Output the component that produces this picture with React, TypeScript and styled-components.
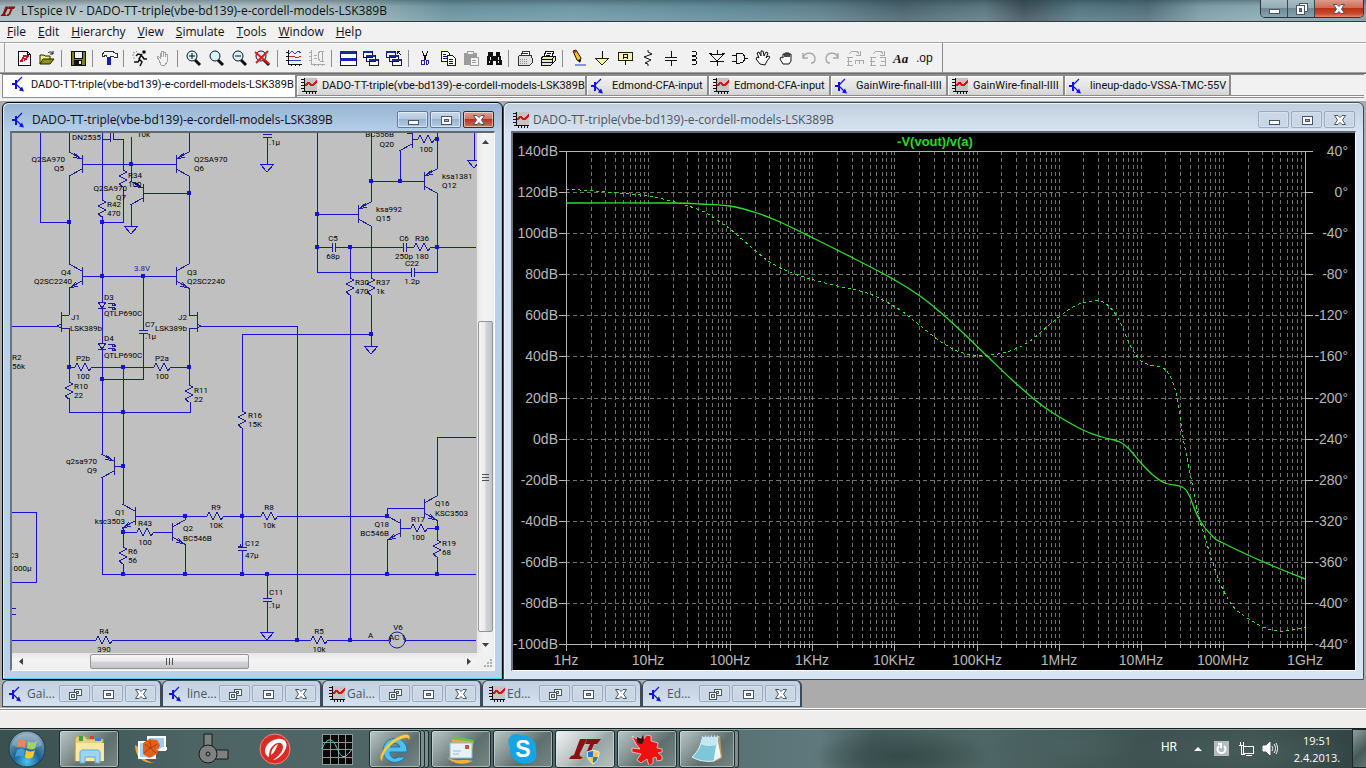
import React from 'react';
import styled, { createGlobalStyle, css } from 'styled-components';

const UI = '"Open Sans", "Noto Sans", sans-serif';
const SMALL = 'Roboto, "Liberation Sans", sans-serif';
const PLAIN = '"Liberation Sans", Arial, sans-serif';

const GlobalStyle = createGlobalStyle`
  *, *::before, *::after { box-sizing: border-box; }
  body { margin: 0; background: #f0f0f0; font-family: ${UI}; font-size: 12px; color: #101010; }
  button { font: inherit; color: inherit; margin: 0; padding: 0; border: 0; background: none; }
  svg { display: block; flex-shrink: 0; }
  h1, h2 { margin: 0; font-size: 12px; line-height: 16px; font-weight: 400; }
`;

const Screen = styled.div`
  display: flex;
  flex-direction: column;
  min-height: 100vh;
`;

/* ---------- main window chrome ---------- */

const TitleBar = styled.header`
  display: flex;
  justify-content: space-between;
  height: 22px;
  padding-right: 2px;
  border-bottom: 1px solid #303c42;
  background:
    linear-gradient(to bottom, rgba(30, 50, 58, 0.35), rgba(255, 255, 255, 0) 30%, rgba(255, 255, 255, 0.12) 90%),
    linear-gradient(to right, #a3b6bc 0, #b3c3c8 8%, #a5babf 24%, #83a2aa 29%, #66909c 33%, #6d96a4 42%, #5f8a99 52%,
      #5d7f8b 60%, #48626c 66%, #5b7780 72%, #3e5058 75%, #527681 79%, #4f6d78 84%, #7b9ca6 88%, #86a7b0 92%, #7f99a0 100%);
`;

const TitleCaption = styled.div`
  display: flex;
  align-items: center;
  gap: 5px;
  color: #0c1114;
`;

const FrameButtons = styled.div`
  display: flex;
  height: 18px;
  border: 1px solid #28343a;
  border-top: 0;
  border-radius: 0 0 5px 5px;
  overflow: hidden;
`;

const FrameButton = styled.button<{ $close?: boolean }>`
  display: grid;
  place-items: center;
  width: ${p => (p.$close ? 48 : 27)}px;
  border-right: ${p => (p.$close ? 0 : 1)}px solid #3a484f;
  background: ${p =>
    p.$close
      ? 'linear-gradient(to bottom, #dc9a8b 0, #cf6b54 45%, #b83314 50%, #c8492c 80%, #e08a66 100%)'
      : 'linear-gradient(to bottom, #a9bdc4 0, #94acb4 45%, #6c8a95 50%, #86a4ad 100%)'};
`;

const MenuBar = styled.nav`
  display: flex;
  align-items: center;
  height: 21px;
  padding-left: 1px;
  border-bottom: 1px solid #a4a4a4;
  background: #f1f1f1;
`;

const MenuItem = styled.button`
  padding: 0 6px;
  line-height: 18px;
  &::first-letter { text-decoration: underline; }
`;

const ToolBar = styled.div`
  display: flex;
  height: 31px;
  padding: 0 4px;
  border-bottom: 1px solid #6e6e6e;
  box-shadow: inset 0 -1px 0 #a0a0a0, inset 0 1px 0 #fff;
  background: #f1f1f1;
`;

const ToolBand = styled.div`
  display: flex;
  align-items: center;
  padding: 0 7px;
  border-left: 1px solid #a0a0a0;
  border-right: 1px solid #8c8c8c;
`;

const ToolButton = styled.button`
  display: grid;
  place-items: center;
  width: 23px;
  height: 22px;
`;

const ToolSeparator = styled.div`
  width: 1px;
  height: 17px;
  margin: 0 4px 0 3px;
  background: #8c8c8c;
`;

const TabStrip = styled.div`
  display: flex;
  align-items: flex-start;
  height: 24px;
  margin: 0 2px 3px;
  padding-top: 2px;
  border-bottom: 1px solid #8c8c8c;
  border-left: 1px solid #8c8c8c;
  box-shadow: inset 0 -1px 0 #fff, inset 0 -2px 0 #8c8c8c, inset 0 1px 0 #8c8c8c;
  background: #f1f1f1;
`;

const Tab = styled.button<{ $w: number; $active?: boolean }>`
  display: flex;
  align-items: center;
  gap: 5px;
  width: ${p => p.$w}px;
  height: 19px;
  padding-left: 4px;
  border-right: 2px solid #8a8a8a;
  font-family: ${SMALL};
  font-size: 11px;
  white-space: nowrap;
  background: linear-gradient(to bottom, #f2f2f2 0, #e6e6e6 50%, #d4d4d4 100%);
  box-shadow: inset 1px 1px 0 #fff, 0 -1px 0 #8c8c8c;
  ${p => p.$active && css`
    gap: 3px;
    height: 22px;
    margin-top: -1px;
    padding: 0 0 4px 9px;
    background: #fff;
    box-shadow: none;
  `}
`;

/* ---------- document windows ---------- */

const Workspace = styled.main`
  display: flex;
  flex-direction: column;
  flex: 1;
  padding: 1px 2px;
  background: #ababab;
`;

const Documents = styled.div`
  display: grid;
  grid-template-columns: minmax(0, 501fr) minmax(0, 861fr);
  flex: 1;
  min-height: 400px;
`;

const DocWindow = styled.section<{ $active?: boolean }>`
  display: flex;
  flex-direction: column;
  min-width: 0;
  padding: 0 7px 8px;
  border: 1px solid ${p => (p.$active ? '#05080b' : '#3e4b59')};
  border-radius: 6px 6px 0 0;
  background: ${p =>
    p.$active
      ? 'linear-gradient(to bottom, #98b4d2 0, #a6c1dd 14px, #b8d0ea 30px, #b9d1ea 100%)'
      : 'linear-gradient(to bottom, #bfcddd 0, #ccd9e7 14px, #d7e4f2 30px, #d7e4f2 100%)'};
  box-shadow: ${p =>
    p.$active ? 'inset -1px -1px 0 #4fd3ee, inset 1px 1px 0 #d8ecfb' : 'inset 1px 1px 0 #e6f0f8'};
`;

const DocTitle = styled.div<{ $active?: boolean }>`
  display: flex;
  align-items: center;
  gap: 4px;
  height: 28px;
  padding: 5px 0 0 2px;
  color: ${p => (p.$active ? '#0a0f14' : '#4c5661')};
`;

const DocName = styled.h2`
  flex: 1;
  min-width: 0;
  overflow: hidden;
  white-space: nowrap;
`;

const ControlGroup = styled.div`
  display: flex;
  gap: 2px;
  padding-right: 1px;
`;

const ControlButton = styled.button<{ $tone: 'blue' | 'red' | 'pale' }>`
  display: grid;
  place-items: center;
  width: 31px;
  height: 17px;
  border: 1px solid ${p => (p.$tone === 'red' ? '#5d1c1c' : p.$tone === 'blue' ? '#62799a' : '#9aabc0')};
  border-radius: 2px;
  box-shadow: inset 0 0 0 1px ${p => (p.$tone === 'pale' ? '#d5e0ec' : 'rgba(255, 255, 255, 0.5)')};
  background: ${p =>
    p.$tone === 'red'
      ? 'linear-gradient(to bottom, #dba197 0, #cf7567 45%, #b23626 50%, #cf6f58 100%)'
      : p.$tone === 'blue'
        ? 'linear-gradient(to bottom, #c6d7ea 0, #b4cae2 45%, #98b3d0 50%, #b5cde6 100%)'
        : 'linear-gradient(to bottom, #ccd8e6, #c8d5e4)'};
`;

const Pane = styled.div`
  display: flex;
  flex-direction: column;
  flex: 1;
  min-height: 0;
  border: 1px solid #fff;
  border-top: 2px solid #5f6770;
  border-left: 2px solid #6b7480;
`;

const SchematicGrid = styled.div`
  display: grid;
  flex: 1;
  grid-template-columns: minmax(0, 1fr) 17px;
  grid-template-rows: minmax(0, 1fr) 17px;
`;

const Sheet = styled.svg`
  width: 100%;
  height: 100%;
  min-height: 0;
  background: #c0c0c0;
  font-family: ${SMALL};
  font-size: 8px;
`;

const ScrollBar = styled.div<{ $vertical?: boolean }>`
  display: flex;
  flex-direction: ${p => (p.$vertical ? 'column' : 'row')};
  background: linear-gradient(${p => (p.$vertical ? 'to right' : 'to bottom')}, #e6e6e6, #f3f3f3 40%, #efefef);
`;

const ScrollArrow = styled.button`
  display: grid;
  place-items: center;
  width: 17px;
  height: 17px;
`;

const ScrollGap = styled.div<{ $grow: number }>`
  flex: ${p => p.$grow} 1 0;
`;

const ScrollThumb = styled.div<{ $grow: number; $vertical?: boolean }>`
  display: grid;
  place-items: center;
  flex: ${p => p.$grow} 1 0;
  margin: ${p => (p.$vertical ? '0 1px' : '1px 0')};
  border: 1px solid #959595;
  border-radius: 2px;
  background: linear-gradient(${p => (p.$vertical ? 'to right' : 'to bottom')}, #f6f6f6 0, #e9e9ea 48%, #d3d4d7 52%, #c3c4c8 100%);
`;

const SizeGrip = styled.div`
  display: grid;
  place-items: end;
  padding: 0 1px 1px 0;
  background: #f0f0f0;
`;

const Plot = styled.svg`
  flex: 1 1 0;
  width: 100%;
  min-height: 0;
  background: #000;
  font-family: ${PLAIN};
  font-size: 14px;
`;

const MinimizedRow = styled.div`
  display: flex;
  height: 27px;
`;

const MinimizedWindow = styled.section`
  display: flex;
  align-items: center;
  gap: 2px;
  width: 160px;
  padding: 0 3px 0 6px;
  border: 1px solid #3e4b59;
  border-width: 1px 2px 1px 1px;
  border-radius: 6px 6px 0 0;
  background: linear-gradient(to bottom, #c3d0df 0, #cbd8e7 50%, #d5e2f0 100%);
  color: #4c5661;
`;

const StatusBar = styled.footer`
  height: 20px;
  border-top: 1px solid #fff;
  box-shadow: inset 0 1px 0 #8f8f8f, inset 0 2px 0 #fafafa;
  background: #f0eeed;
`;

/* ---------- taskbar ---------- */

const TaskBar = styled.div`
  display: flex;
  height: 40px;
  border-top: 1px solid #16201f;
  box-shadow: inset 0 1px 0 #8ea3a2;
  background:
    radial-gradient(ellipse 90px 26px at 66% 70%, #354a49, transparent),
    radial-gradient(ellipse 70px 22px at 78% 40%, #48605f, transparent),
    radial-gradient(ellipse 110px 26px at 91% 60%, #465b58, transparent),
    linear-gradient(to right, #39504f 0, #4d6464 14%, #4f6566 26%, #567072 52%, #60797c 60%, #445a5a 64%, #4e6665 72%,
      #3d5251 84%, #3f5450 92%, #2f4443 100%);
`;

const StartButton = styled.button`
  display: grid;
  place-items: center;
  width: 59px;
  padding-right: 5px;
`;

const TaskList = styled.div`
  display: flex;
  flex: 1;
  gap: 2px;
  padding: 1px 0 0;
`;

const TaskSlot = styled.div`
  display: flex;
  width: 60px;
  height: 38px;
`;

const TaskButton = styled.button<{ $state: 'idle' | 'open' | 'focus' }>`
  display: grid;
  place-items: center;
  flex: 1;
  border: 1px solid transparent;
  border-radius: 3px;
  ${p => p.$state !== 'idle' && css`
    border-color: #1d2a2b;
    box-shadow: inset 0 0 0 1px rgba(215, 230, 230, 0.55);
    background: ${p.$state === 'focus'
      ? 'linear-gradient(135deg, #f0f4f3 0, #b9c3c2 45%, #99a5a4 60%, #b7c2c0 100%)'
      : 'linear-gradient(135deg, #bac7c7 0, #82908f 38%, #5e6f6e 60%, #788786 100%)'};
  `}
`;

const StackEdge = styled.div`
  width: 4px;
  border: 1px solid #1d2a2b;
  border-left: 0;
  border-radius: 0 3px 3px 0;
  background: #7e8e8e;
`;

const Tray = styled.div`
  display: flex;
  align-items: center;
  color: #fff;
`;

const Language = styled.span`
  width: 25px;
  font-family: ${SMALL};
  font-size: 12px;
  line-height: 36px;
  align-self: flex-start;
`;

const TrayIcon = styled.button`
  display: grid;
  place-items: center;
  width: 24px;
`;

const Clock = styled.time`
  width: 70px;
  font-size: 11px;
  line-height: 17px;
  text-align: center;
`;

const ShowDesktop = styled.button`
  align-self: stretch;
  width: 14px;
  border: 1px solid #1b2625;
  border-right: 0;
  background: linear-gradient(135deg, #8e9f9e, #465a58 60%, #5f7270);
`;

/* ---------- icons ---------- */

const TransistorIcon = () => (
  <svg width="16" height="16" viewBox="0 0 16 16" fill="none" stroke="#1010e0" aria-hidden>
    <path d="M0 8h4M4 4v9" strokeWidth="2" shapeRendering="crispEdges" />
    <path d="M4 7l6-6M5 9l5 5" strokeWidth="1.2" />
    <path d="M12 15.500l-5-1 3-4z" fill="#1010e0" stroke="none" />
  </svg>
);

const GraphIcon = () => (
  <svg width="16" height="16" viewBox="0 0 16 16" fill="none" shapeRendering="crispEdges" aria-hidden>
    <path d="M3 0h13v13H3z" fill="#c4c4c4" />
    <path d="M3 0v14M1 13h15M0 1h3M0 4h3M0 7h3M0 10h3M5 13v3M8 13v3M11 13v3M14 13v3" stroke="#101010" />
    <path d="M4 8l3-3h1l2 2h2l4-4" stroke="#e01010" strokeWidth="2" />
  </svg>
);

const LtLogo = ({ size }: { size: number }) => (
  <svg width={size} height={size} viewBox="0 0 32 32" fill="#8c0f12" aria-hidden>
    <path d="M11 7h7l-7 13c-1 3 0 4 3 4l-2 2H1l2-3 2-1z" />
    <path d="M18 7h13l-3 5h-3l-4 10-4 4h-4l2-4h2l4-10h-5z" />
  </svg>
);

type Kind = 'min' | 'max' | 'close' | 'restore' | 'cascade';
const Glyph = ({ kind, edge = '#4a5563' }: { kind: Kind; edge?: string }) => (
  <svg width="14" height="12" viewBox="0 0 14 12" fill="none" stroke={edge} shapeRendering={kind === 'close' ? 'auto' : 'crispEdges'} aria-hidden>
    {kind === 'min' && <path d="M2 6h10v4H2z" fill="#fff" />}
    {kind === 'max' && <><path d="M2 2h10v8H2z" fill="#fff" /><path d="M5 5h4v2H5z" fill="#9fb0c4" /></>}
    {kind === 'restore' && <><path d="M5 0h8v8h-8z" fill="#fff" /><path d="M2 2h8v9H2z" fill="#fff" /><path d="M5 5h2v3H5z" fill="#6c8a95" /></>}
    {kind === 'cascade' && <><path d="M6 1h7v6H6z" fill="#fff" /><path d="M8 3h2v2H8z" /><path d="M1 4h7v7H1z" fill="#fff" /><path d="M3 6h3v3H3z" fill="#c8d5e4" /></>}
    {kind === 'close' && <path d="M1.500 1.500h3.500L7 3.500l2-2h3.500L9.500 6l3 4.500H9L7 8.500l-2 2H1.500l3-4.500z" fill="#fff" />}
  </svg>
);

const Lens = ({ children }: { children?: React.ReactNode }) => (
  <>
    <path d="M9 10l5 5" stroke="#101010" strokeWidth="3" />
    <circle cx="6" cy="6" r="5" fill="#d6f4f2" stroke="#101030" />
    {children}
  </>
);

const tools: Record<string, React.ReactNode> = {
  'New schematic': <><path d="M2 1h9l3 3v11H2z" fill="#fff" stroke="#101010" /><path d="M11 1v3h3" stroke="#101010" /><path d="M4 11l2-1 2-4h-1M4 11h3M8 6h4l-1 2M8 10l3-2" stroke="#d01020" strokeWidth="2" /></>,
  Open: <><path d="M1 14V5h4l1 1h5v3" fill="#f0f080" stroke="#202000" /><path d="M1 14l3-5h11l-4 5z" fill="#909020" stroke="#202000" /><path d="M9 3c2-2 4-1 5 1M14 1v3h-3" stroke="#101010" /></>,
  Save: <><path d="M1 1h14v14H1z" fill="#808020" stroke="#101010" /><path d="M4 1h8v7H4z" fill="#f4f4f4" stroke="#101010" /><path d="M4 10h8v5H4z" fill="#101010" /><path d="M9 11h2v3H9z" fill="#f4f4f4" /></>,
  'Control panel': <><path d="M1 5l2-3 3-1h5l3 2h2v4h-3l-2-1-2 1H6L5 5 2 7z" fill="#f4f4f4" stroke="#303030" /><path d="M8 7v8" stroke="#1020c0" strokeWidth="4" /></>,
  Run: <><circle cx="12" cy="2" r="1.800" fill="#101010" /><path d="M10 4L7 9l3 3-2 4M8 9l-2 3H2M10 5L6 4 4 6M10 6l2 3h3" stroke="#101010" strokeWidth="1.500" /><path d="M1 2l2 1M0 5h2M1 8h2M4 1l1 1" stroke="#909090" /></>,
  Halt: <path d="M4 10L2 7l1-1 2 2V3h1v4V1h2v6V2h2v5V4h2v8l-2 3H6z" fill="#f4f4f4" stroke="#a4a4a4" />,
  'Zoom in': <Lens><path d="M3 6h6M6 3v6" stroke="#101010" /></Lens>,
  Pan: <Lens />,
  'Zoom out': <Lens><path d="M3 6h6" stroke="#101010" /></Lens>,
  'Zoom full': <Lens><path d="M0 2l14 12M13 1L1 13" stroke="#e01818" strokeWidth="2" /></Lens>,
  'Pick visible traces': <><path d="M2 0v14h14M0 2h2M0 6h2M0 10h2M5 14v2M9 14v2M13 14v2" stroke="#101010" /><path d="M3 4l3-3 3 3 3-3 3 2" stroke="#3040c0" /><path d="M3 7l4-1 4 2 4-2" stroke="#d02020" /><path d="M3 11l4-1 4 1 4-1" stroke="#3040c0" /></>,
  'Autorange': <><path d="M2 0v14h14M0 2h2M0 6h2M0 10h2M5 14v2M9 14v2M13 14v2M5 5h3M5 8h3M15 1h-4L9 4v4l2 3h4M13 1v10" stroke="#a8a8a8" /></>,
  'Tile windows': <><path d="M0 1h16v7H0zM0 8h16v7H0z" fill="#fff" stroke="#101060" /><path d="M0 2h16M0 9h16" stroke="#1828a0" strokeWidth="3" /></>,
  'Cascade windows': <><path d="M0 1h9v6H0zM3 5h9v6H3zM6 9h9v6H6z" fill="#fff" stroke="#101060" /><path d="M0 2h9M3 6h9M6 10h9" stroke="#1828a0" strokeWidth="2" /></>,
  'Close windows': <><path d="M0 1h9v6H0zM3 5h9v6H3zM6 9h9v6H6z" fill="#fff" stroke="#101060" /><path d="M0 2h9M3 6h9M6 10h9" stroke="#1828a0" strokeWidth="2" /><path d="M15 5l-4-4M11 4V1h3" stroke="#101010" /></>,
  Cut: <><path d="M5 1l4 9M11 1L7 10" stroke="#101010" /><path d="M5 10h2v4H4v-3zM9 10h2l1 3-1 1H9z" stroke="#2020a0" /></>,
  Copy: <><path d="M1 1h6l2 2v8H1z" fill="#fff" stroke="#101060" /><path d="M3 4h3M3 6h4M3 8h4" stroke="#101060" /><path d="M7 5h5l3 3v7H7z" fill="#fff" stroke="#101060" /><path d="M9 9h4M9 11h4M9 13h4" stroke="#101060" /></>,
  Paste: <><path d="M1 3h12v11H1z" fill="#9c9c9c" stroke="#9c9c9c" /><path d="M4 1h6v3H4z" fill="#f0f0f0" stroke="#9c9c9c" /><path d="M7 7h8v8H7z" fill="#f4f4f4" stroke="#9c9c9c" /><path d="M9 10h4M9 12h4" stroke="#9c9c9c" /></>,
  Find: <><path d="M3 2h3v4h4V2h3l2 8v4h-5v-4H6v4H1v-4z" fill="#101010" stroke="#101010" /><path d="M4 7v3M12 7v3M3 11v2M12 11v2" stroke="#e8e8e8" /></>,
  'Print setup': <><path d="M4 6l2-5h6l1 5M5 3h6" fill="#fff" stroke="#303030" /><path d="M1 7l2-2h11l1 3v5l-2 2H1z" fill="#e0e0e0" stroke="#303030" /><path d="M3 9h8M3 11h8M3 13h8" stroke="#909090" strokeDasharray="1 1" /></>,
  Print: <><path d="M4 6l2-5h8l-2 5z" fill="#fff" stroke="#101010" /><path d="M7 3h4M6 5h4" stroke="#101010" /><path d="M1 8l3-2h11v5l-4 4H1z" fill="#e8e8c0" stroke="#101010" /><path d="M1 9h11l3-3M1 12h11M12 9v5" stroke="#101010" /></>,
  Wire: <><path d="M2 1l3-1 5 8-1 4-3-2z" fill="#f0c820" stroke="#101010" /><path d="M2 1l3-1 1 2-3 1z" fill="#d02020" /><path d="M7 10l2 3V9z" fill="#101010" /><path d="M4 15h11" stroke="#2030e0" /></>,
  Ground: <><path d="M8 1v7" stroke="#101010" /><path d="M1 8h14l-7 7z" fill="#f4f4a0" stroke="#202000" /></>,
  'Label net': <><path d="M1 2h14v8H1z" fill="#f4f4b0" stroke="#202000" /><path d="M6 9V4h4v5M6 7h4M8 10v5" stroke="#101010" /></>,
  Resistor: <path d="M8 0v2l4 2-8 3 7 3-6 3 3 1v2" stroke="#101010" />,
  Capacitor: <path d="M8 1v6M8 10v6M2 7h12M2 10h12" stroke="#101010" />,
  Inductor: <path d="M6 1c6 0 6 5 0 5c6 0 6 4 0 4c6 0 6 5 0 5" stroke="#101010" />,
  Diode: <path d="M0 3h3M13 3h3M8 0v4M8 11v5M1 4h14l-7 7zM1 11h14" stroke="#101010" />,
  Component: <path d="M0 5h4M0 11h4M4 3v10h4c6 0 6-10 0-10zM12 8h4" stroke="#101010" />,
  Move: <path d="M5 14L1 9 2 7l2 1-2-5 2-1 2 4V1h2l1 5 2-4 2 1-2 5 2-2 2 1-3 4-2 4z" fill="#fff" stroke="#101010" />,
  Drag: <path d="M5 14l-3-5 1-2 2 1V4h2v3V3h2v4V3h2v4V4h2v7l-2 3z" fill="#fff" stroke="#101010" />,
  Undo: <path d="M2 3v5h5M2 8c2-7 12-6 12 1 0 3-2 4-4 4" stroke="#a8a8a8" strokeWidth="1.400" />,
  Redo: <path d="M14 3v5H9M14 8C12 1 2 2 2 9c0 3 2 4 4 4" stroke="#a8a8a8" strokeWidth="1.400" />,
  Rotate: <path d="M2 4c3-4 8-4 10 0M13 1v4H9M0 7h6M1 7v8M0 11h5M0 15h6M8 14v-4h8v4M12 10v4" stroke="#a8a8a8" />,
  Mirror: <path d="M3 4c3-4 8-4 10 0M14 1v4h-4M0 7h6M1 7v8M0 11h5M0 15h6M10 7h6M15 7v8M11 11h4M10 15h6" stroke="#a8a8a8" />,
  Text: <text x="0" y="13" fontFamily="Liberation Serif, serif" fontSize="13" fontWeight="700" fontStyle="italic" fill="#101010">Aa</text>,
  'SPICE directive': <text x="0" y="12" fontFamily="Liberation Sans, sans-serif" fontSize="12" fill="#101010">.op</text>,
};

const toolGroups = [
  ['New schematic', 'Open'], ['Save'], ['Control panel'], ['Run', 'Halt'],
  ['Zoom in', 'Pan', 'Zoom out', 'Zoom full'], ['Pick visible traces', 'Autorange'],
  ['Tile windows', 'Cascade windows', 'Close windows'], ['Cut', 'Copy', 'Paste', 'Find'],
  ['Print setup', 'Print'],
  ['Wire', 'Ground', 'Label net', 'Resistor', 'Capacitor', 'Inductor', 'Diode', 'Component', 'Move', 'Drag',
    'Undo', 'Redo', 'Rotate', 'Mirror', 'Text', 'SPICE directive'],
];
const smooth = ['Zoom in', 'Pan', 'Zoom out', 'Zoom full', 'Move', 'Drag', 'Undo', 'Redo', 'Run', 'Open', 'Wire', 'Resistor'];

const menus = ['File', 'Edit', 'Hierarchy', 'View', 'Simulate', 'Tools', 'Window', 'Help'];
const docName = 'DADO-TT-triple(vbe-bd139)-e-cordell-models-LSK389B';
const tabs = [
  { name: docName, w: 294, graph: false },
  { name: docName, w: 290, graph: true },
  { name: 'Edmond-CFA-input', w: 122, graph: false },
  { name: 'Edmond-CFA-input', w: 122, graph: true },
  { name: 'GainWire-finall-IIII', w: 117, graph: false },
  { name: 'GainWire-finall-IIII', w: 117, graph: true },
  { name: 'lineup-dado-VSSA-TMC-55V', w: 166, graph: false },
];
const minimized = [
  { name: 'Gai...', graph: false }, { name: 'line...', graph: false }, { name: 'Gai...', graph: true },
  { name: 'Ed...', graph: true }, { name: 'Ed...', graph: false },
];

/* ---------- schematic ---------- */

const WIRE = '#1414d2';
const SYMBOL = '#1c1c9c';

const wires = [
  'M40 133V222H69', 'M69 133V152M69 176V264M69 288V315M69 328V382M69 398V412H190V402',
  'M102 133V200M102 216V302M102 308V343M102 349V454M102 478V574H476', 'M102 139H110M113 139H123V170M123 187V222H102',
  'M131 137V181M131 205V226', 'M82 164H176', 'M189 133V152M189 176V264M189 288V315M189 328V385', 'M143 193H189',
  'M82 276H176', 'M143 276V330M143 333V379H102', 'M12 326H57M201 326H297V640', 'M69 367H75M92 367H154M171 367H189',
  'M123 367V504M123 528V547M123 564V574', 'M114 466H123', 'M135 516H207M224 516H261M278 516H387',
  'M123 532H137M154 532H172', 'M185 520V516M185 544V574', 'M12 512H36V582H12', 'M12 640H96M113 640H311M328 640H389M405 640H476',
  'M242 411V334H371M242 428V547M242 550V574', 'M267 574V598M267 601V632', 'M267 137V164', 'M317 133V272H411M317 214H358M317 247H332M335 247H403M406 247H414M431 247H476',
  'M371 133V202M371 226V278M371 295V346', 'M371 181H424M400 181V151', 'M350 247V278M350 295V640', 'M414 272H437V193M437 133V169', 'M412 139H418M435 139H437',
  'M474 133V160', 'M476 437H437V496M437 520V540M437 557V574', 'M424 508H387V516M387 540V574M400 528H411M428 528H437',
];
const nodes = [
  [69, 222], [102, 222], [131, 164], [189, 193], [102, 276], [143, 276], [69, 367], [123, 367], [189, 367], [102, 379],
  [123, 412], [123, 466], [123, 532], [185, 516], [242, 516], [387, 516], [123, 574], [185, 574], [242, 574], [267, 574],
  [387, 574], [437, 574], [297, 640], [350, 640], [317, 214], [317, 247], [350, 247], [437, 247], [371, 181], [400, 181],
  [437, 139], [371, 334], [437, 528],
];
const vResistors = [[102, 200], [123, 170], [69, 382], [189, 385], [123, 547], [242, 411], [350, 278], [371, 278], [437, 540]];
const hResistors = [[75, 367], [154, 367], [207, 516], [261, 516], [137, 532], [96, 640], [311, 640], [414, 247], [418, 139], [411, 528]];
const vCaps = [[143, 330], [242, 547], [267, 598], [267, 134]];
const hCaps = [[332, 247], [403, 247], [411, 272]];
const grounds = [[131, 226], [267, 164], [267, 632], [371, 346], [474, 160]];
const bjts: [number, number, 1 | -1, boolean][] = [
  [82, 164, -1, true], [176, 164, 1, true], [143, 193, -1, true], [82, 276, -1, false], [176, 276, 1, false],
  [114, 466, -1, true], [135, 516, -1, false], [172, 532, 1, false], [358, 214, 1, true], [424, 181, 1, true],
  [412, 139, -1, true], [424, 508, 1, false], [400, 528, -1, false],
];
const labels: [string, number, number, ('end' | 'middle')?][] = [
  ['DN2535', 72, 140], ['10k', 137, 137], ['Q2SA970', 65, 162, 'end'], ['Q5', 64, 171, 'end'], ['Q2SA970', 194, 162], ['Q6', 194, 171],
  ['R34', 128, 178], ['100', 128, 187], ['Q2SA970', 127, 191, 'end'], ['Q7', 126, 200, 'end'], ['R42', 107, 207], ['470', 107, 216],
  ['Q4', 71, 275, 'end'], ['Q2SC2240', 72, 284, 'end'], ['Q3', 187, 275], ['Q2SC2240', 187, 284], ['D3', 104, 300], ['QTLP690C', 104, 316],
  ['J1', 71, 320], ['LSK389b', 70, 331], ['J2', 187, 320, 'end'], ['LSK389b', 187, 331, 'end'], ['C7', 145, 327], ['.1µ', 145, 339],
  ['D4', 104, 341], ['QTLP690C', 104, 358], ['R2', 12, 360], ['56k', 12, 369], ['P2b', 83, 361, 'middle'], ['100', 83, 379, 'middle'],
  ['P2a', 162, 361, 'middle'], ['100', 162, 379, 'middle'], ['R10', 74, 389], ['22', 74, 398], ['R11', 194, 393], ['22', 194, 402],
  ['R16', 248, 418], ['15K', 248, 427], ['q2sa970', 97, 464, 'end'], ['Q9', 97, 473, 'end'], ['Q1', 125, 515, 'end'], ['ksc3503', 125, 524, 'end'],
  ['R43', 145, 526, 'middle'], ['100', 145, 545, 'middle'], ['Q2', 183, 531], ['BC546B', 183, 541], ['R9', 216, 510, 'middle'], ['10K', 216, 528, 'middle'],
  ['R8', 269, 510, 'middle'], ['10k', 269, 528, 'middle'], ['R6', 128, 554], ['56', 128, 563], ['C12', 245, 546], ['47µ', 245, 558],
  ['C11', 269, 595], ['.1µ', 269, 608], ['C3', 9, 558], ['1000µ', 9, 571], ['R4', 104, 634, 'middle'], ['390', 104, 652, 'middle'],
  ['R5', 319, 634, 'middle'], ['10k', 319, 652, 'middle'], ['A', 368, 638], ['V6', 398, 630, 'middle'], ['AC 1', 389, 640],
  ['.1µ', 269, 145], ['BC556B', 394, 137, 'end'], ['Q20', 394, 147, 'end'], ['100', 426, 152, 'middle'], ['ksa1381', 442, 179], ['Q12', 442, 188],
  ['ksa992', 376, 212], ['Q15', 376, 221], ['C5', 333, 241, 'middle'], ['68p', 333, 259, 'middle'], ['C6', 404, 241, 'middle'], ['R36', 422, 241, 'middle'],
  ['250p', 404, 259, 'middle'], ['180', 422, 259, 'middle'], ['C22', 412, 266, 'middle'], ['1.2p', 412, 284, 'middle'],
  ['R30', 355, 285], ['470', 355, 294], ['R37', 376, 285], ['1k', 376, 294], ['Q16', 435, 506], ['KSC3503', 435, 516],
  ['R17', 418, 522, 'middle'], ['100', 418, 540, 'middle'], ['Q18', 389, 527, 'end'], ['BC546B', 389, 536, 'end'], ['R19', 442, 546], ['68', 442, 555],
];

const bjtPath = ([x, y, d, pnp]: [number, number, 1 | -1, boolean]) => {
  const body = `M${x} ${y - 9}V${y + 9}M${x} ${y - 5}L${x + 13 * d} ${y - 12}M${x} ${y + 5}L${x + 13 * d} ${y + 12}`;
  const arrow = pnp
    ? `M${x + 8 * d} ${y - 11}L${x + d} ${y - 5}L${x + 9 * d} ${y - 7}`
    : `M${x + 4 * d} ${y + 10}L${x + 12 * d} ${y + 12}L${x + 6 * d} ${y + 6}`;
  return body + arrow;
};
const ledPath = (x: number, y: number) =>
  `M${x - 4} ${y}h8l-4 6zM${x - 4} ${y + 6}h8M${x + 6} ${y + 1}h4v2h4M${x + 6} ${y + 5}h4v2h4M${x + 11} ${y + 1}l3 2l-3 1M${x + 11} ${y + 5}l3 2l-3 1`;

const Schematic = () => (
  <Sheet role="img" aria-label="Amplifier schematic">
    <g transform="translate(-12 -133)">
      <g fill="none" stroke={WIRE} shapeRendering="crispEdges">
        {wires.map(d => <path key={d} d={d} />)}
        {grounds.map(([x, y]) => <path key={`${x}-${y}`} d={`M${x - 7} ${y}h14l-7 8z`} />)}
      </g>
      <g fill="none" stroke={SYMBOL} shapeRendering="crispEdges">
        {vResistors.map(([x, y]) => <path key={`v${x}-${y}`} d={`M${x} ${y}l4 2l-8 4l8 4l-8 4l4 3`} />)}
        {hResistors.map(([x, y]) => <path key={`h${x}-${y}`} d={`M${x} ${y}l2 -4l4 8l4 -8l4 8l3 -4`} />)}
        {vCaps.map(([x, y]) => <path key={`c${x}-${y}`} d={`M${x - 4} ${y}h9M${x - 4} ${y + 3}h9`} />)}
        {hCaps.map(([x, y]) => <path key={`c${x}-${y}`} d={`M${x} ${y - 4}v9M${x + 3} ${y - 4}v9`} />)}
        {bjts.map(b => <path key={b.join()} d={bjtPath(b)} />)}
        <path d={ledPath(102, 302) + ledPath(102, 343)} />
        <path d="M61 312v20M61 315h8M61 328h8M57 326l4-2v4zM197 312v20M197 315h-8M197 328h-8M201 326l-4-2v4z" />
        <path d="M110 133v9M113 133v6M240 544v4M238 546h4M12 608h4M12 614h4" />
        <path d="M390 638v4M405 638v4" />
      </g>
      <circle cx="397" cy="640" r="8" fill="none" stroke={SYMBOL} />
      <g fill={WIRE} shapeRendering="crispEdges">
        {nodes.map(([x, y]) => <rect key={`${x}-${y}`} x={x - 2} y={y - 2} width="4" height="4" />)}
      </g>
      <g fill="#000">
        {labels.map(([t, x, y, a], i) => <text key={i} x={x} y={y} textAnchor={a}>{t}</text>)}
        <text x="134" y="271" fill="#2020a8">3.8V</text>
      </g>
    </g>
  </Sheet>
);

/* ---------- Bode plot ---------- */

const L = 566, R = 1305, T = 151, B = 644;
const gain: [number, number][] = [
  [566, 203], [673, 203], [700, 204], [730, 206], [757, 213], [780, 222], [813, 238], [853, 258], [893, 279],
  [920, 296], [940, 312], [960, 330], [987, 356], [1010, 378], [1035, 400], [1053, 413], [1083, 430], [1102, 437], [1120, 442],
  [1130, 450], [1141, 463], [1153, 475], [1165, 483], [1182, 487], [1189, 495], [1199, 519], [1213, 537],
  [1223, 543], [1248, 555], [1273, 566], [1305, 579],
];
const phase: [number, number][] = [
  [566, 189], [607, 192], [640, 195], [667, 200], [700, 210], [717, 220], [730, 229], [757, 252], [770, 262],
  [787, 271], [807, 278], [833, 285], [860, 291], [877, 297], [900, 310], [917, 323], [937, 339], [955, 350], [972, 355],
  [990, 355], [1010, 351], [1030, 341], [1055, 320], [1075, 306], [1092, 301], [1105, 303], [1118, 318], [1130, 345],
  [1140, 360], [1150, 365], [1163, 368], [1171, 378], [1177, 398], [1183, 437], [1191, 478], [1199, 517], [1212, 560],
  [1220, 583], [1230, 602], [1240, 613], [1263, 627], [1280, 631], [1292, 630], [1305, 627],
];

const curve = (p: [number, number][]) =>
  p.slice(1).reduce((d, b, i) => {
    const a = p[i], before = p[i - 1] ?? a, after = p[i + 2] ?? b;
    const c1 = [a[0] + (b[0] - before[0]) / 6, a[1] + (b[1] - before[1]) / 6];
    const c2 = [b[0] - (after[0] - a[0]) / 6, b[1] - (after[1] - a[1]) / 6];
    return `${d}C${c1.join(' ')} ${c2.join(' ')} ${b.join(' ')}`;
  }, `M${p[0].join(' ')}`);

const decadeX = (n: number) => Math.round(L + ((R - L) * n) / 9);
const rowY = (n: number) => Math.round(T + ((B - T) * n) / 12);
const minor = Array.from({ length: 9 }, (_, d) => [2, 3, 4, 5, 6, 7, 8, 9].map(k => decadeX(d + Math.log10(k)))).flat();
const major = Array.from({ length: 10 }, (_, d) => decadeX(d));
const rows = Array.from({ length: 13 }, (_, i) => i);
const freqs = ['1Hz', '10Hz', '100Hz', '1KHz', '10KHz', '100KHz', '1MHz', '10MHz', '100MHz', '1GHz'];

const BodePlot = () => (
  <Plot viewBox="513 133 842 537" role="img" aria-label="Gain and phase against frequency">
    <g fill="none" shapeRendering="crispEdges">
      <path stroke="#727272" strokeDasharray="4 3" d={[...minor, ...major.slice(1, 9)].map(x => `M${x} ${T}V${B}`).join('')} />
      <path stroke="#727272" strokeDasharray="4 3" d={rows.slice(1, 12).map(n => `M${L} ${rowY(n)}H${R}`).join('')} />
      <path stroke="#b4b4b4" d={`M${L} ${T}H${R}V${B}H${L}z`} />
      <path stroke="#b4b4b4" d={rows.map(n => `M${L - 7} ${rowY(n)}h7M${R} ${rowY(n)}h8`).join('')} />
      <path stroke="#b4b4b4" d={minor.map(x => `M${x} ${B}v4`).join('') + major.map(x => `M${x} ${B}v7`).join('')} />
      <path stroke="#34e034" strokeDasharray="3 3" d={curve(phase)} />
    </g>
    <path d={curve(gain)} fill="none" stroke="#2ee02e" strokeWidth="1.300" />
    <g fill="#b8b8b8">
      {rows.map(n => (
        <React.Fragment key={n}>
          <text x="558" y={rowY(n) + 5} textAnchor="end">{`${140 - 20 * n}dB`}</text>
          <text x="1348" y={rowY(n) + 5} textAnchor="end">{`${40 - 40 * n}°`}</text>
        </React.Fragment>
      ))}
      {freqs.map((f, i) => <text key={f} x={major[i]} y="665" textAnchor="middle">{f}</text>)}
    </g>
    <text x="935" y="146" textAnchor="middle" fontSize="13" fontWeight="700" fill="#22dd22">-V(vout)/v(a)</text>
  </Plot>
);

/* ---------- taskbar pictures ---------- */

const StartOrb = () => (
  <svg width="38" height="38" viewBox="0 0 38 38" aria-hidden>
    <defs>
      <radialGradient id="orb" cx="50%" cy="85%" r="80%">
        <stop offset="0" stopColor="#4fc4ee" /><stop offset="0.45" stopColor="#1c6294" /><stop offset="1" stopColor="#8aa5b4" />
      </radialGradient>
    </defs>
    <circle cx="19" cy="19" r="18" fill="url(#orb)" stroke="#1b3a50" />
    <path d="M10 11c3-2 5-2 8 0l-1 7c-3-2-6-2-8 0z" fill="#e8622c" />
    <path d="M20 11c3 2 6 2 9 0l-2 8c-3 1-5 1-8-1z" fill="#8cc63e" />
    <path d="M9 20c3-2 5-2 8 0l-2 7c-3-2-5-1-8 0z" fill="#3f9fe0" />
    <path d="M18 20c3 2 6 2 9 0l-2 7c-3 2-6 2-8 0z" fill="#fbc92c" />
    <path d="M4 15a15.500 15.500 0 0 1 30 0c-8 5-20 5-30 0z" fill="#fff" opacity="0.22" />
  </svg>
);

const pictures: Record<string, React.ReactNode> = {
  'Windows Explorer': <><path d="M2 6l2-3h8l2 3h16v22H2z" fill="#e9cf7c" stroke="#b89a45" /><path d="M6 3h4v5H6z" fill="#3aa04c" /><path d="M17 3h4v3h-4z" fill="#d5402e" /><path d="M22 5h6v3h-6z" fill="#3a80d0" /><path d="M3 10h28v18H3z" fill="#f8e8a6" /><path d="M7 30V20c0-2 1-3 3-3h14c2 0 3 1 3 3v10h-5v-6H12v6z" fill="#9fd4f2" stroke="#5ea8d8" /></>,
  'Photo Gallery': <><path d="M0 12c0 12 8 19 20 18-9-1-15-7-15-15z" fill="#f2a63a" /><path d="M3 8h18v18H3z" fill="#fff" /><path d="M5 10h14v14H5z" fill="#a8d4ea" /><path d="M12 3h19v15H12z" fill="#fff" /><path d="M14 5h15v11H14z" fill="#9dcdea" /><path d="M8 10l6-4 8 1 3 5-3 9-8 4-6-4z" fill="#e2601c" /><path d="M15 8l1 7 6-4M15 15l6 5M15 15l-6 5M15 15l-5-4" stroke="#a83a0c" /><path d="M21 17h11v-3h-3" fill="#fff" /></>,
  'CAD viewer': <g fill="#7f8080" stroke="#16191a"><path d="M7 1h8v13H7z" /><path d="M18 17h13v9H18z" /><circle cx="11" cy="21" r="9" /><circle cx="11" cy="21" r="2" /></g>,
  'Antivirus': <><circle cx="16" cy="16" r="15" fill="#dc2a24" stroke="#f48a80" /><path d="M10 24C2 20 7 8 18 6c8-1 11 4 9 9-2 6-9 12-13 12 8-5 12-12 9-16-3-3-9 0-12 6-1 3-1 6-1 7z" fill="#fff" /><path d="M12 22c0-5 3-9 7-11-2 5-4 9-7 11z" fill="#fff" /></>,
  'Signal scope': <g fill="none" shapeRendering="crispEdges"><path d="M1 1h30v30H1z" fill="#080808" stroke="#909898" /><path d="M9 1v30M17 1v30M24 1v30M1 9h30M1 16h30M1 24h30" stroke="#8c9494" /><path d="M1 16C5 5 11 4 15 13s7 17 16 3" stroke="#4fe0cc" shapeRendering="auto" /></g>,
  'Internet Explorer': <><path d="M28 18a12 12 0 1 0-2 6h-7c-3 3-8 1-8-5h17zM11 14c1-5 9-5 10 0z" fill="#4fbef0" stroke="#1b78b8" /><path d="M3 28c-5-3 3-17 14-23s15-4 13 2c0-3-4-3-12 1S3 22 3 28z" fill="#f6cf4a" stroke="#d39c1c" strokeWidth="0.500" /></>,
  'Windows Live Mail': <><path d="M9 3l20 4-3 16-19-5z" fill="#74b94a" /><path d="M7 6l21 3-2 16-20-4z" fill="#e8a54a" /><path d="M5 10h22v15H5z" fill="#e6f2fa" stroke="#8ebbd8" /><path d="M20 12h4v4h-4z" fill="#d8502c" /><path d="M8 18h8M8 21h6" stroke="#8ebbd8" /><path d="M2 24c8 6 16 1 26 4-8 4-20 4-26-4z" fill="#f4b13a" /></>,
  Skype: <><path d="M9 1c3 0 4 1 6 1a14 14 0 0 1 14 17c2 6-2 12-9 11A14 14 0 0 1 3 14C-1 8 3 1 9 1z" fill="#12a5e8" /><text x="16" y="24" textAnchor="middle" fontFamily="Liberation Sans, sans-serif" fontSize="23" fontWeight="700" fill="#fff">S</text></>,
  LTspice: <><path d="M11 6h7l-7 14c-1 3 0 4 3 4l-2 2H0l2-3 3-1z" fill="#8c0f12" /><path d="M18 6h14l-4 5h-3l-4 10h-4l4-10h-5z" fill="#8c0f12" /><path d="M18 19l6-2 6 2c0 6-2 9-6 12-4-3-6-6-6-12z" fill="#f3cf3c" stroke="#e8eef2" /><path d="M24 18v6h-5c0-2 0-3 0-5zM24 24h5c-1 3-2 5-5 6z" fill="#2f74c8" /></>,
  IrfanView: <><path d="M1 3l5 3 3-2 3 3 4-5 4 1v5l7 2-1 5 5 1v3l-4 1 4 3v4l-5 1-1-4-3 1v5l-4 3-2-7-6 4-4-3 4-6-9-2v-4l8 1-4-5z" fill="#f01010" stroke="#fff" strokeWidth="0.600" /><path d="M6 4l4 2 2-4 1 5-2 4-5-1z" fill="#301010" /></>,
  Notepad: <><path d="M13 3h16l2 22-8 4z" fill="#b89a62" /><path d="M26 4l4 20-7 4z" fill="#eef6f6" /><path d="M12 3h15l-4 25c-8 1-15 0-22-4 6-5 9-12 11-21z" fill="#7cc8da" stroke="#e8f6fa" /><path d="M12 3h15l-1 9c-7 2-12 1-17-1z" fill="#c4e8f0" /><path d="M13 2v2M16 2v2M19 2v2M22 2v2M25 2v2" stroke="#556" /></>,
};

const tasks: { name: string; state: 'idle' | 'open' | 'focus'; stack?: number }[] = [
  { name: 'Windows Explorer', state: 'open' }, { name: 'Photo Gallery', state: 'idle' }, { name: 'CAD viewer', state: 'idle' },
  { name: 'Antivirus', state: 'idle' }, { name: 'Signal scope', state: 'idle' }, { name: 'Internet Explorer', state: 'open', stack: 2 },
  { name: 'Windows Live Mail', state: 'open' }, { name: 'Skype', state: 'open' }, { name: 'LTspice', state: 'focus' },
  { name: 'IrfanView', state: 'open' }, { name: 'Notepad', state: 'open', stack: 1 },
];

/* ---------- page ---------- */

const Controls = ({ kinds, active }: { kinds: Kind[]; active?: boolean }) => (
  <ControlGroup>
    {kinds.map(k => (
      <ControlButton key={k} aria-label={k} $tone={!active ? 'pale' : k === 'close' ? 'red' : 'blue'}>
        <Glyph kind={k} />
      </ControlButton>
    ))}
  </ControlGroup>
);

export default function App() {
  return (
    <Screen>
      <GlobalStyle />
      <TitleBar>
        <TitleCaption>
          <LtLogo size={16} />
          <h1>LTspice IV - {docName}</h1>
        </TitleCaption>
        <FrameButtons>
          <FrameButton aria-label="Minimize"><Glyph kind="min" /></FrameButton>
          <FrameButton aria-label="Restore"><Glyph kind="restore" /></FrameButton>
          <FrameButton aria-label="Close" $close><Glyph kind="close" /></FrameButton>
        </FrameButtons>
      </TitleBar>
      <MenuBar>{menus.map(m => <MenuItem key={m}>{m}</MenuItem>)}</MenuBar>
      <ToolBar>
        <ToolBand>
          {toolGroups.map((group, i) => (
            <React.Fragment key={group[0]}>
              {i > 0 && <ToolSeparator />}
              {group.map(name => (
                <ToolButton key={name} aria-label={name}>
                  <svg width="16" height="16" viewBox="0 0 16 16" fill="none" overflow="visible"
                    shapeRendering={smooth.includes(name) ? 'auto' : 'crispEdges'}>
                    {tools[name]}
                  </svg>
                </ToolButton>
              ))}
            </React.Fragment>
          ))}
        </ToolBand>
      </ToolBar>
      <TabStrip>
        {tabs.map((t, i) => (
          <Tab key={i} $w={t.w} $active={i === 0}>
            {t.graph ? <GraphIcon /> : <TransistorIcon />}
            {t.name}
          </Tab>
        ))}
      </TabStrip>
      <Workspace>
        <Documents>
          <DocWindow $active>
            <DocTitle $active>
              <TransistorIcon />
              <DocName>{docName}</DocName>
              <Controls kinds={['min', 'max', 'close']} active />
            </DocTitle>
            <Pane>
              <SchematicGrid>
                <Schematic />
                <ScrollBar $vertical>
                  <ScrollArrow aria-label="Scroll up"><svg width="7" height="4"><path d="M0 4L3.500 0 7 4z" fill="#404040" /></svg></ScrollArrow>
                  <ScrollGap $grow={172} />
                  <ScrollThumb $vertical $grow={310}>
                    <svg width="7" height="8" shapeRendering="crispEdges"><path d="M0 1h7M0 4h7M0 7h7" stroke="#505050" /></svg>
                  </ScrollThumb>
                  <ScrollGap $grow={4} />
                  <ScrollArrow aria-label="Scroll down"><svg width="7" height="4"><path d="M0 0L3.500 4 7 0z" fill="#404040" /></svg></ScrollArrow>
                </ScrollBar>
                <ScrollBar>
                  <ScrollArrow aria-label="Scroll left"><svg width="4" height="7"><path d="M4 0L0 3.500 4 7z" fill="#404040" /></svg></ScrollArrow>
                  <ScrollGap $grow={61} />
                  <ScrollThumb $grow={158}>
                    <svg width="8" height="7" shapeRendering="crispEdges"><path d="M1 0v7M4 0v7M7 0v7" stroke="#505050" /></svg>
                  </ScrollThumb>
                  <ScrollGap $grow={212} />
                  <ScrollArrow aria-label="Scroll right"><svg width="4" height="7"><path d="M0 0L4 3.500 0 7z" fill="#404040" /></svg></ScrollArrow>
                </ScrollBar>
                <SizeGrip>
                  <svg width="10" height="10" fill="#b0b0b0"><path d="M7 0h2v2H7zM4 3h2v2H4zM7 3h2v2H7zM1 6h2v2H1zM4 6h2v2H4zM7 6h2v2H7z" /></svg>
                </SizeGrip>
              </SchematicGrid>
            </Pane>
          </DocWindow>
          <DocWindow>
            <DocTitle>
              <GraphIcon />
              <DocName>{docName}</DocName>
              <Controls kinds={['min', 'max', 'close']} />
            </DocTitle>
            <Pane><BodePlot /></Pane>
          </DocWindow>
        </Documents>
        <MinimizedRow>
          {minimized.map((m, i) => (
            <MinimizedWindow key={i}>
              {m.graph ? <GraphIcon /> : <TransistorIcon />}
              <DocName>{m.name}</DocName>
              <Controls kinds={['cascade', 'max', 'close']} />
            </MinimizedWindow>
          ))}
        </MinimizedRow>
      </Workspace>
      <StatusBar />
      <TaskBar>
        <StartButton aria-label="Start"><StartOrb /></StartButton>
        <TaskList>
          {tasks.map(t => (
            <TaskSlot key={t.name}>
              <TaskButton aria-label={t.name} $state={t.state}>
                <svg width="32" height="32" viewBox="0 0 32 32" fill="none">{pictures[t.name]}</svg>
              </TaskButton>
              {Array.from({ length: t.stack ?? 0 }, (_, i) => <StackEdge key={i} />)}
            </TaskSlot>
          ))}
        </TaskList>
        <Tray>
          <Language>HR</Language>
          <TrayIcon aria-label="Show hidden icons"><svg width="8" height="4"><path d="M0 4L4 0l4 4z" fill="#fff" /></svg></TrayIcon>
          <TrayIcon aria-label="Updates">
            <svg width="16" height="16" fill="none"><path d="M0 0h15v15H0z" fill="#b4bcbc" /><path d="M5 5a4 4 0 1 0 5 0M4 3h3v4" stroke="#fff" strokeWidth="2" /></svg>
          </TrayIcon>
          <TrayIcon aria-label="Network">
            <svg width="16" height="16" fill="none" stroke="#fff" shapeRendering="crispEdges"><path d="M5 5h10v7H5zM8 14h6M2 1v3M5 1v3M1 4h5M3 4v9h4" /></svg>
          </TrayIcon>
          <TrayIcon aria-label="Volume">
            <svg width="16" height="16" fill="none" stroke="#fff"><path d="M1 5h3l4-4v13l-4-4H1z" fill="#fff" /><path d="M10 5c1 2 1 3 0 5M12 3c2 3 2 6 0 9M14 2c2 4 2 7 0 11" /></svg>
          </TrayIcon>
          <Clock>19:51<br />2.4.2013.</Clock>
          <ShowDesktop aria-label="Show desktop" />
        </Tray>
      </TaskBar>
    </Screen>
  );
}
